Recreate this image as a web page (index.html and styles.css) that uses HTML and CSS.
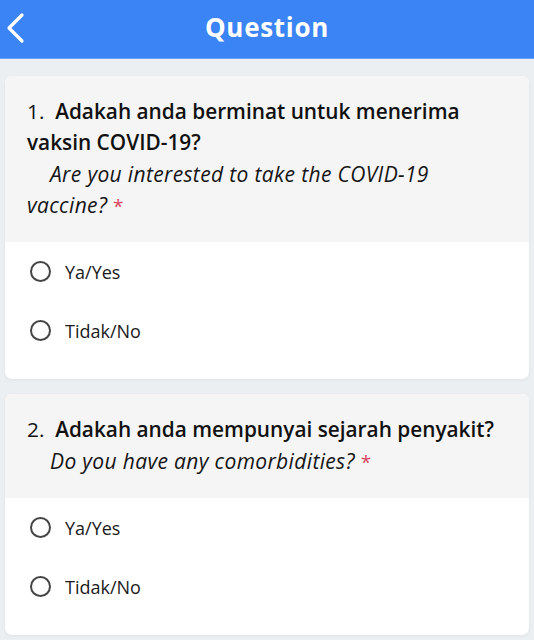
FILE: index.html
```html
<!DOCTYPE html>
<html>
<head>
<meta charset="utf-8">
<link rel="stylesheet" href="styles.css">
</head>
<body>
<header class="topbar">
  <svg class="back" width="24" height="32" viewBox="0 0 24 32" aria-hidden="true">
    <path d="M18 3 L5 16 L18 29" fill="none" stroke="#fff" stroke-width="3.2" stroke-linecap="round" stroke-linejoin="round"/>
  </svg>
  <h1 class="title">Question</h1>
</header>
<main class="content">
  <section class="card">
    <div class="card-head">
      <p class="q">1.&nbsp; <b>Adakah anda berminat untuk menerima vaksin COVID-19?</b></p>
      <p class="en">Are you interested to take the COVID-19 vaccine? <span class="req">*</span></p>
    </div>
    <div class="options">
      <label class="opt"><span class="radio"></span><span>Ya/Yes</span></label>
      <label class="opt"><span class="radio"></span><span>Tidak/No</span></label>
    </div>
  </section>
  <section class="card">
    <div class="card-head">
      <p class="q">2.&nbsp; <b>Adakah anda mempunyai sejarah penyakit?</b></p>
      <p class="en">Do you have any comorbidities? <span class="req">*</span></p>
    </div>
    <div class="options">
      <label class="opt"><span class="radio"></span><span>Ya/Yes</span></label>
      <label class="opt"><span class="radio"></span><span>Tidak/No</span></label>
    </div>
  </section>
</main>
</body>
</html>
```

FILE: styles.css
```css
* { box-sizing: border-box; }
html, body {
  margin: 0;
  padding: 0;
  background: #ebeff1;
  font-family: "Open Sans", Lato, sans-serif;
  color: #111;
}
.topbar {
  position: relative;
  height: 59px;
  padding-bottom: 5px;
  background: #3b84f6;
  border-bottom: 1px solid #6aa2f4;
  display: flex;
  align-items: center;
  justify-content: center;
}
.back {
  position: absolute;
  left: 4px;
  top: 12px;
}
.title {
  margin: 0;
  color: #fff;
  font-size: 26px;
  font-weight: 700;
  letter-spacing: 0.7px;
}
.content {
  padding: 17px 5px 10px;
  display: flex;
  flex-direction: column;
  gap: 15px;
}
.card {
  background: #fff;
  border-radius: 7px;
  overflow: hidden;
  box-shadow: 0 1px 3px rgba(0,0,0,0.06);
}
.card-head {
  background: #f5f5f5;
  padding: 20px 22px 20px;
}
.q, .en {
  margin: 0;
  line-height: 31px;
}
.q {
  font-size: 20.8px;
  font-weight: 400;
}
.q b { font-weight: 600; }
.en {
  margin-top: 1px;
  font-size: 21px;
  letter-spacing: 0.35px;
  font-style: italic;
  text-indent: 23px;
  color: #161616;
}
.req {
  color: #d84660;
  font-style: normal;
  font-size: 19px;
}
.options {
  padding: 0 0 19px;
}
.opt {
  height: 59px;
  display: flex;
  align-items: center;
  gap: 14px;
  padding-left: 25px;
  font-size: 18px;
  color: #1a1a1a;
}
.radio {
  width: 21px;
  height: 21px;
  border: 2.6px solid #444;
  border-radius: 50%;
  flex: none;
}
```
